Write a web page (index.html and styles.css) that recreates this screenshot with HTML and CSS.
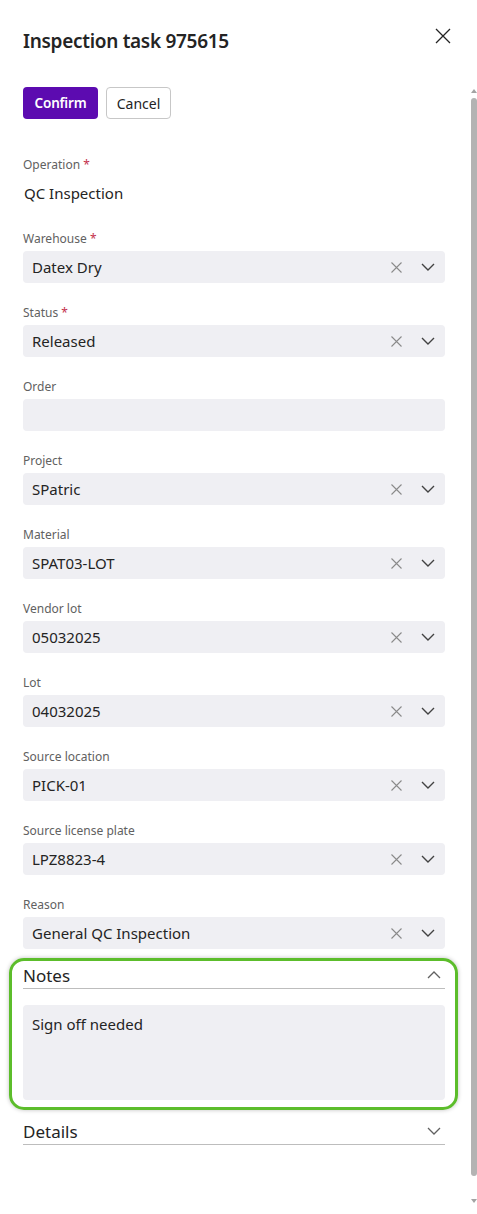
FILE: index.html
```html
<!DOCTYPE html>
<html lang="en">
<head>
<meta charset="utf-8">
<title>Inspection task 975615</title>
<link rel="stylesheet" href="styles.css">
</head>
<body>
<div class="panel">
  <header class="header">
    <h1 class="title">Inspection task 975615</h1>
    <button class="close" aria-label="Close">
      <svg width="16" height="16" viewBox="0 0 16 16"><path d="M1 1 L15 15 M15 1 L1 15" stroke="#242424" stroke-width="1.3" fill="none"/></svg>
    </button>
  </header>
  <div class="body">
    <div class="content">
      <div class="actions">
        <button class="btn btn-primary">Confirm</button>
        <button class="btn btn-secondary">Cancel</button>
      </div>

      <div class="field">
        <div class="label">Operation <span class="req">*</span></div>
        <div class="readonly">QC Inspection</div>
      </div>

      <div class="field">
        <div class="label">Warehouse <span class="req">*</span></div>
        <div class="select"><span class="val">Datex Dry</span><span class="icons"><svg class="clear" width="11" height="11" viewBox="0 0 11 11"><path d="M0.5 0.5 L10.5 10.5 M10.5 0.5 L0.5 10.5" stroke="#8a8a8a" stroke-width="1.1" fill="none"/></svg><svg class="chev" width="14" height="8" viewBox="0 0 14 8"><path d="M1 1 L7 7 L13 1" stroke="#424242" stroke-width="1.4" fill="none"/></svg></span></div>
      </div>

      <div class="field">
        <div class="label">Status <span class="req">*</span></div>
        <div class="select"><span class="val">Released</span><span class="icons"><svg class="clear" width="11" height="11" viewBox="0 0 11 11"><path d="M0.5 0.5 L10.5 10.5 M10.5 0.5 L0.5 10.5" stroke="#8a8a8a" stroke-width="1.1" fill="none"/></svg><svg class="chev" width="14" height="8" viewBox="0 0 14 8"><path d="M1 1 L7 7 L13 1" stroke="#424242" stroke-width="1.4" fill="none"/></svg></span></div>
      </div>

      <div class="field">
        <div class="label">Order</div>
        <div class="select"><span class="val"></span></div>
      </div>

      <div class="field">
        <div class="label">Project</div>
        <div class="select"><span class="val">SPatric</span><span class="icons"><svg class="clear" width="11" height="11" viewBox="0 0 11 11"><path d="M0.5 0.5 L10.5 10.5 M10.5 0.5 L0.5 10.5" stroke="#8a8a8a" stroke-width="1.1" fill="none"/></svg><svg class="chev" width="14" height="8" viewBox="0 0 14 8"><path d="M1 1 L7 7 L13 1" stroke="#424242" stroke-width="1.4" fill="none"/></svg></span></div>
      </div>

      <div class="field">
        <div class="label">Material</div>
        <div class="select"><span class="val">SPAT03-LOT</span><span class="icons"><svg class="clear" width="11" height="11" viewBox="0 0 11 11"><path d="M0.5 0.5 L10.5 10.5 M10.5 0.5 L0.5 10.5" stroke="#8a8a8a" stroke-width="1.1" fill="none"/></svg><svg class="chev" width="14" height="8" viewBox="0 0 14 8"><path d="M1 1 L7 7 L13 1" stroke="#424242" stroke-width="1.4" fill="none"/></svg></span></div>
      </div>

      <div class="field">
        <div class="label">Vendor lot</div>
        <div class="select"><span class="val">05032025</span><span class="icons"><svg class="clear" width="11" height="11" viewBox="0 0 11 11"><path d="M0.5 0.5 L10.5 10.5 M10.5 0.5 L0.5 10.5" stroke="#8a8a8a" stroke-width="1.1" fill="none"/></svg><svg class="chev" width="14" height="8" viewBox="0 0 14 8"><path d="M1 1 L7 7 L13 1" stroke="#424242" stroke-width="1.4" fill="none"/></svg></span></div>
      </div>

      <div class="field">
        <div class="label">Lot</div>
        <div class="select"><span class="val">04032025</span><span class="icons"><svg class="clear" width="11" height="11" viewBox="0 0 11 11"><path d="M0.5 0.5 L10.5 10.5 M10.5 0.5 L0.5 10.5" stroke="#8a8a8a" stroke-width="1.1" fill="none"/></svg><svg class="chev" width="14" height="8" viewBox="0 0 14 8"><path d="M1 1 L7 7 L13 1" stroke="#424242" stroke-width="1.4" fill="none"/></svg></span></div>
      </div>

      <div class="field">
        <div class="label">Source location</div>
        <div class="select"><span class="val">PICK-01</span><span class="icons"><svg class="clear" width="11" height="11" viewBox="0 0 11 11"><path d="M0.5 0.5 L10.5 10.5 M10.5 0.5 L0.5 10.5" stroke="#8a8a8a" stroke-width="1.1" fill="none"/></svg><svg class="chev" width="14" height="8" viewBox="0 0 14 8"><path d="M1 1 L7 7 L13 1" stroke="#424242" stroke-width="1.4" fill="none"/></svg></span></div>
      </div>

      <div class="field">
        <div class="label">Source license plate</div>
        <div class="select"><span class="val">LPZ8823-4</span><span class="icons"><svg class="clear" width="11" height="11" viewBox="0 0 11 11"><path d="M0.5 0.5 L10.5 10.5 M10.5 0.5 L0.5 10.5" stroke="#8a8a8a" stroke-width="1.1" fill="none"/></svg><svg class="chev" width="14" height="8" viewBox="0 0 14 8"><path d="M1 1 L7 7 L13 1" stroke="#424242" stroke-width="1.4" fill="none"/></svg></span></div>
      </div>

      <div class="field field-last">
        <div class="label">Reason</div>
        <div class="select"><span class="val">General QC Inspection</span><span class="icons"><svg class="clear" width="11" height="11" viewBox="0 0 11 11"><path d="M0.5 0.5 L10.5 10.5 M10.5 0.5 L0.5 10.5" stroke="#8a8a8a" stroke-width="1.1" fill="none"/></svg><svg class="chev" width="14" height="8" viewBox="0 0 14 8"><path d="M1 1 L7 7 L13 1" stroke="#424242" stroke-width="1.4" fill="none"/></svg></span></div>
      </div>

      <section class="highlight">
        <div class="section-head">
          <span class="section-title">Notes</span>
          <svg class="sec-chev" width="14" height="8" viewBox="0 0 14 8"><path d="M1 7 L7 1 L13 7" stroke="#616161" stroke-width="1.3" fill="none"/></svg>
        </div>
        <div class="notes">Sign off needed</div>
      </section>

      <section class="section-details">
        <div class="section-head">
          <span class="section-title">Details</span>
          <svg class="sec-chev" width="14" height="8" viewBox="0 0 14 8"><path d="M1 1 L7 7 L13 1" stroke="#616161" stroke-width="1.3" fill="none"/></svg>
        </div>
      </section>
    </div>
    <div class="scrollbar">
      <div class="arrow arrow-up"></div>
      <div class="thumb"></div>
      <div class="arrow arrow-down"></div>
    </div>
  </div>
</div>
</body>
</html>
```

FILE: styles.css
```css
* { box-sizing: border-box; }
html, body { margin: 0; padding: 0; background: #ffffff; }
body {
  font-family: "Noto Sans", "Open Sans", sans-serif;
  color: #242424;
}
.panel {
  width: 477px;
  height: 1214px;
  display: flex;
  flex-direction: column;
  overflow: hidden;
}
.header {
  display: flex;
  justify-content: space-between;
  align-items: flex-start;
  padding: 27px 26px 0 23px;
  height: 87px;
}
.title {
  margin: 0;
  font-size: 19px;
  font-weight: 600;
  letter-spacing: -0.3px;
  line-height: 28px;
  color: #242424;
}
.close {
  border: 0;
  background: none;
  padding: 0;
  margin-top: 1px;
  width: 16px;
  height: 16px;
  display: flex;
}
.body {
  flex: 1;
  display: flex;
}
.content {
  width: 422px;
  margin-left: 23px;
}
.actions {
  display: flex;
  gap: 8px;
  margin-bottom: 37px;
}
.btn {
  height: 32px;
  border-radius: 4px;
  font-family: inherit;
  font-size: 14px;
  padding: 0;
}
.btn-primary {
  background: #5c0bb0;
  color: #ffffff;
  border: 0;
  font-weight: 600;
  font-size: 13.5px;
  letter-spacing: -0.2px;
  width: 75px;
}
.btn-secondary {
  background: #ffffff;
  border: 1px solid #c7c7c7;
  color: #242424;
  width: 65px;
}
.field { margin-bottom: 21px; }
.field-last { margin-bottom: 9px; }
.label {
  font-size: 12px;
  line-height: 17px;
  color: #616161;
  margin-bottom: 4px;
}
.req { color: #c4314b; }
.readonly {
  height: 32px;
  display: flex;
  align-items: center;
  padding-left: 1px;
  font-size: 15px;
  color: #242424;
}
.select {
  height: 32px;
  background: #efeff3;
  border-radius: 4px;
  display: flex;
  align-items: center;
  justify-content: space-between;
  padding: 0 10px 0 9px;
  font-size: 15px;
  color: #242424;
}
.icons {
  display: flex;
  align-items: center;
  gap: 19px;
}
.clear, .chev { display: block; }
.highlight {
  margin: 0 -13px 0 -14px;
  padding: 1px 10px 7px 11px;
  border: 3px solid #5cbd2b;
  border-radius: 15px;
  box-shadow: 0 0 4px rgba(0, 0, 0, 0.25);
}
.section-head {
  display: flex;
  justify-content: space-between;
  align-items: center;
  height: 27px;
  border-bottom: 1px solid #bdbdbd;
  padding-right: 4px;
}
.section-title {
  font-size: 17px;
  color: #242424;
}
.notes {
  margin-top: 16px;
  height: 95px;
  background: #efeff3;
  border-radius: 4px;
  padding: 9px 9px;
  font-size: 15px;
  line-height: 20px;
}
.section-details {
  margin-top: 8px;
}
.scrollbar {
  width: 7px;
  margin-left: 25px;
  display: flex;
  flex-direction: column;
  align-items: center;
  padding-top: 2px;
}
.arrow {
  width: 0;
  height: 0;
  border-left: 3px solid transparent;
  border-right: 3px solid transparent;
}
.arrow-up { border-bottom: 4px solid #a3a3a3; }
.arrow-down { border-top: 4px solid #a3a3a3; margin-top: 23px; }
.thumb {
  margin-top: 5px;
  width: 6px;
  height: 1078px;
  background: #b3b3b3;
  border-radius: 3px;
}
```
